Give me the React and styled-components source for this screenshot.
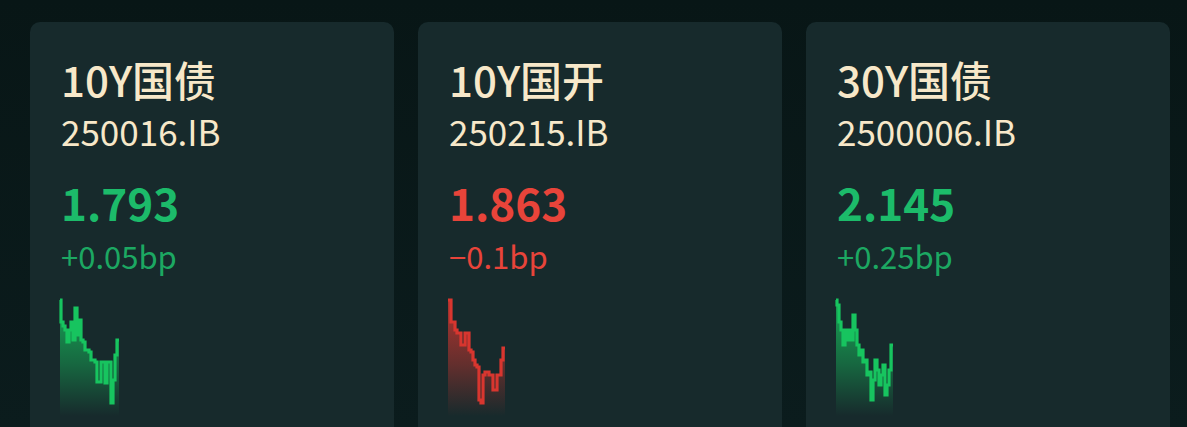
import React from 'react';
import styled, { createGlobalStyle } from 'styled-components';

const GlobalStyle = createGlobalStyle`
  html, body {
    margin: 0;
    padding: 0;
    background: #0a1a1b;
    font-family: "Noto Sans CJK SC", "Noto Sans", sans-serif;
  }
`;

const bonds = [
  {
    name: '10Y国债',
    code: '250016.IB',
    value: '1.793',
    change: '+0.05bp',
    up: true,
    series: [300, 322, 326, 330, 342, 330, 322, 340, 308, 335, 320, 340, 342, 350, 350, 352, 360, 360, 362, 382, 382, 362, 362, 383, 362, 362, 403, 380, 355, 340],
  },
  {
    name: '10Y国开',
    code: '250215.IB',
    value: '1.863',
    change: '\u22120.1bp',
    up: false,
    series: [300, 300, 322, 322, 330, 333, 333, 345, 345, 333, 333, 350, 352, 360, 365, 367, 400, 403, 375, 372, 372, 375, 375, 390, 390, 375, 375, 360, 348],
  },
  {
    name: '30Y国债',
    code: '2500006.IB',
    value: '2.145',
    change: '+0.25bp',
    up: true,
    series: [300, 305, 322, 330, 345, 330, 340, 330, 340, 315, 330, 345, 355, 350, 362, 360, 375, 372, 400, 380, 360, 370, 385, 375, 365, 395, 385, 370, 345],
  },
];

const GREEN = '#1cbb6a';
const RED = '#e8443a';

// CHART BOX: values are page y, top of box is 298
const CHART_TOP = 298;
const CHART_H = 118;
const STEP = 2;

function Sparkline({ series, up, id }) {
  const color = up ? '#17c45f' : '#d8362f';
  const ys = series.map((v) => v - CHART_TOP);
  let line = `M1 ${ys[0]}`;
  ys.forEach((y, i) => {
    if (i > 0) line += ` V${y}`;
    line += ` H${(i + 1) * STEP}`;
  });
  const w = ys.length * STEP + 2;
  const area = `${line} V${CHART_H} H1 Z`;
  return (
    <ChartSvg width={w} height={CHART_H} viewBox={`0 0 ${w} ${CHART_H}`}>
      <defs>
        <linearGradient id={id} x1="0" y1="0" x2="0" y2="1">
          <stop offset="0%" stopColor={color} stopOpacity="0.8" />
          <stop offset="55%" stopColor={color} stopOpacity="0.4" />
          <stop offset="100%" stopColor={color} stopOpacity="0" />
        </linearGradient>
      </defs>
      <path d={area} fill={`url(#${id})`} />
      <path d={line} fill="none" stroke={color} strokeWidth="3.2" strokeLinejoin="miter" />
    </ChartSvg>
  );
}

export default function App() {
  return (
    <>
      <GlobalStyle />
      <Page>
        {bonds.map((b, i) => (
          <Card key={b.code}>
            <Title>{b.name}</Title>
            <Code>{b.code}</Code>
            <Value up={b.up}>{b.value}</Value>
            <Change up={b.up}>{b.change}</Change>
            <Sparkline series={b.series} up={b.up} id={`spark-${i}`} />
          </Card>
        ))}
      </Page>
    </>
  );
}

const Page = styled.div`
  display: grid;
  grid-template-columns: repeat(3, 1fr);
  gap: 24px;
  height: 427px;
  box-sizing: border-box;
  padding: 22px 17px 0 30px;
  overflow: hidden;
  background: linear-gradient(180deg, #081616 0%, #0b1c1d 100%);
`;

const Card = styled.div`
  display: flex;
  flex-direction: column;
  align-items: flex-start;
  background: #172a2c;
  border-radius: 10px 10px 0 0;
  padding: 30px 32px 0 31px;
  height: 440px;
  box-sizing: border-box;
`;

const Title = styled.div`
  color: #f7e8c9;
  font-size: 42px;
  font-weight: 500;
  line-height: 54px;
`;

const Code = styled.div`
  color: #f7e8c9;
  font-size: 35px;
  font-weight: 400;
  line-height: 46px;
  margin-top: 2px;
`;

const Value = styled.div`
  color: ${(p) => (p.up ? GREEN : RED)};
  font-size: 44px;
  font-weight: 600;
  line-height: 58px;
  margin-top: 19px;
`;

const Change = styled.div`
  color: ${(p) => (p.up ? '#1ca862' : RED)};
  font-size: 31px;
  line-height: 40px;
  margin-top: 5px;
`;

const ChartSvg = styled.svg`
  display: block;
  margin-top: 22px;
  margin-left: -2px;
`;
